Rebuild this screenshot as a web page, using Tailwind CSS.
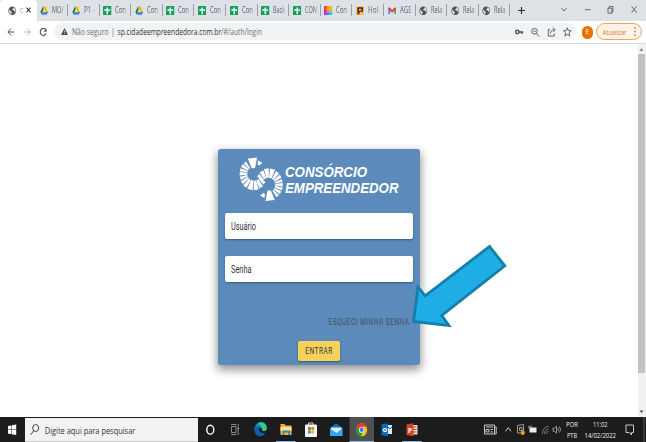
<!DOCTYPE html>
<html lang="pt-BR">
<head>
<meta charset="utf-8">
<title>Consórcio Empreendedor</title>
<script src="https://cdn.jsdelivr.net/npm/@tailwindcss/browser@4"></script>
</head>
<body class="w-[646px] h-[442px] overflow-hidden bg-white font-['Open_Sans','Noto_Sans',sans-serif] text-[#3c4043]">
<svg class="hidden">
  <symbol id="drive" viewBox="0 0 24 24" preserveAspectRatio="none"><path fill="#188038" d="M8 2h4L5 22 1 15z"/><path fill="#fbbc04" d="M8 2h8l7 13h-7z"/><path fill="#4285f4" d="M8 15h15l-4 7H5z"/></symbol>
  <symbol id="sheet" viewBox="0 0 24 24" preserveAspectRatio="none"><rect width="24" height="24" rx="2" fill="#12a05c"/><path fill="#fff" d="M10 4h4v4h6v4h-6v9h-4v-9H4V8h6z"/></symbol>
  <symbol id="globe" viewBox="0 0 24 24" preserveAspectRatio="none"><circle cx="12" cy="12" r="11" fill="#50555a"/><path fill="#e4e7ea" d="M3 9l7 6v6C5 20 2 15 3 9zM8 4l7-1v4l-3 1v3h4l3 3 1 3c3-5 2-9-2-12l-3-2z"/></symbol>
  <symbol id="mosaic" viewBox="0 0 24 24" preserveAspectRatio="none"><path fill="#f44336" d="M0 0h8v8H0z"/><path fill="#ff9800" d="M8 0h8v8H8z"/><path fill="#ffc107" d="M16 0h8v8h-8z"/><path fill="#e91e90" d="M0 8h8v8H0z"/><path fill="#ff8a3c" d="M8 8h8v8H8z"/><path fill="#8bdc30" d="M16 8h8v8h-8z"/><path fill="#9c27f0" d="M0 16h8v8H0z"/><path fill="#4b7cff" d="M8 16h8v8H8z"/><path fill="#20cfc0" d="M16 16h8v8h-8z"/></symbol>
  <symbol id="hol" viewBox="0 0 24 24" preserveAspectRatio="none"><rect width="24" height="24" rx="2" fill="#f7c948"/><path fill="#3a1f2b" d="M4 3h16v12H10v6H4z"/><path fill="#fff" d="M9 7h6v5H9z"/><path fill="#d8432e" d="M12 9h6v5h-6zM2 18h8v3H2z"/></symbol>
  <symbol id="gmail" viewBox="0 0 24 24" preserveAspectRatio="none"><path fill="#4285f4" d="M1 5h5v15H1z"/><path fill="#34a853" d="M18 5h5v15h-5z"/><path fill="#ea4335" d="M1 4h4l7 6 7-6h4v4l-11 9L1 8z"/></symbol>
</svg>

<div class="flex flex-col w-[646px] h-[442px]">
  <!-- tab strip -->
  <header class="flex h-[20.5px] shrink-0 bg-[#dee1e6] text-[8px] text-[#5f6368]">
    <div class="flex items-center w-[36.5px] shrink-0 bg-white rounded-t-[4px] pl-[8px]">
      <svg class="w-[8.5px] h-[9.5px] shrink-0"><use href="#globe"/></svg>
      <svg class="w-[4px] h-[12px] ml-[3px] shrink-0" viewBox="0 0 4 12"><text x="0" y="9" textLength="3" lengthAdjust="spacingAndGlyphs" fill="#8a8e92">C</text></svg>
      <svg class="w-[5px] h-[6px] ml-[2.5px]" viewBox="0 0 10 10" preserveAspectRatio="none"><path d="M1 1l8 8M9 1l-8 8" stroke="#333" stroke-width="2.2"/></svg>
    </div>
    <div id="tabs" class="flex"></div>
    <div class="flex items-center flex-1">
      <svg class="w-[7px] h-[7px] ml-[7.500px]" viewBox="0 0 7 7"><path d="M3.5 0v7M0 3.5h7" stroke="#2b2e31" stroke-width="1.2"/></svg>
      <svg class="w-[77px] h-[10px] ml-[36.500px] shrink-0" viewBox="0 0 77 10" fill="none" stroke="#4b4f54" stroke-width=".8"><path d="M.5 3l2.500 3L5.500 3M24 4.700h5.500M47 3.200h3.800v5h-3.800zM48.200 3.100V1.500h3.800v5.300h-1M70.500 1.300l5.200 6.500M75.700 1.300l-5.200 6.500"/></svg>
    </div>
  </header>

  <!-- toolbar -->
  <div class="flex items-center h-[23px] shrink-0 border-b border-[#d9dbde] bg-white">
    <svg class="w-[54px] h-[22px] shrink-0" viewBox="0 0 54 22" fill="none" stroke-width="1"><path stroke="#50555a" d="M14.300 11H8M11 7.600L7.900 11l3.100 3.400"/><path stroke="#b6b9bd" d="M24 11h6.300M27.300 7.600l3.100 3.400-3.100 3.400"/><path stroke="#50555a" stroke-width="1.200" d="M45.700 8.800A3 3.600 0 1 0 46 12.500"/><path fill="#50555a" d="M46.700 7.300v3.400h-3z"/></svg>
    <div class="flex items-center w-[522px] h-[16.500px] rounded-full bg-[#f1f3f4] shrink-0 pl-[6.500px]">
      <svg class="w-[7px] h-[7px] shrink-0" viewBox="0 0 14 14"><path d="M7 0l7 14H0z" fill="#4a4e52"/><path d="M7 5v4M7 10.500v1.500" stroke="#f1f3f4" stroke-width="1.400"/></svg>
      <svg class="w-[210px] h-[16px] shrink-0 ml-[4px]" viewBox="0 0 210 16" font-size="9"><text x="0" y="11.300" textLength="36.500" lengthAdjust="spacingAndGlyphs" fill="#6b7075">Não seguro</text><path d="M41 4v9" stroke="#8a8e92" stroke-width=".7"/><text x="45.500" y="11.300" textLength="144.500" lengthAdjust="spacingAndGlyphs" fill="#303336">sp.cidadeempreendedora.com.br<tspan fill="#6b7075">/#/auth/login</tspan></text></svg>
      <svg class="w-[62px] h-[16px] ml-auto mr-[1.500px]" viewBox="0 0 62 16" fill="none" stroke="#50555a" stroke-width=".9"><circle cx="4.300" cy="8" r="1.700" stroke-width="1.500"/><path stroke-width="1.500" d="M6 8h4.200M9 8v2"/><circle cx="21.500" cy="7.200" r="2.800"/><path d="M23.500 9.500l2.600 3M20.200 7.200h2.600"/><path d="M37 5.500h-1.700v6.500h6V9.500M37.500 9.500c0-2.500 1.500-3.800 4-3.800M40 3.500l2.200 2.200L40 8"/><path d="M54.300 3.800l1.100 2.800 2.700.2-2.100 2 .7 3.200-2.400-1.700-2.400 1.700.7-3.200-2.100-2 2.700-.2z"/></svg>
    </div>
    <div class="flex items-center justify-center w-[11px] h-[13px] mt-[1px] ml-[6px] shrink-0 rounded-full bg-[#ee6c00] text-white text-[7px]">E</div>
    <div class="flex items-center w-[46px] h-[17.500px] ml-[3px] shrink-0 rounded-full border border-[#eda45c] bg-[#fef3e8]">
      <svg class="w-[44px] h-[15px]" viewBox="0 0 44 15"><text x="5.700" y="10.500" font-size="8" textLength="24" lengthAdjust="spacingAndGlyphs" fill="#dc7d22">Atualizar</text><g fill="#e08a20"><circle cx="38" cy="4" r=".9"/><circle cx="38" cy="7.500" r=".9"/><circle cx="38" cy="11" r=".9"/></g></svg>
    </div>
  </div>

  <!-- page -->
  <main class="flex flex-1 min-h-0">
    <div class="w-[637.500px] pt-[105px] pl-[218px]">
      <form class="w-[201.500px] h-[216.500px] rounded-[3px] bg-[#5c8aba] shadow-[0_4px_10px_1px_rgba(0,0,0,.42)] px-[7px] pt-[7px] flex flex-col font-[Roboto,sans-serif]">
        <svg class="w-[170px] h-[48px] ml-[10px] shrink-0" viewBox="0 0 170 48">
          <g id="rays" fill="#fff"></g>
          <g fill="#fff" font-family="Liberation Sans, Arial, sans-serif" font-style="italic" font-weight="700" font-size="15.500"><text x="50" y="21" textLength="82" lengthAdjust="spacingAndGlyphs">CONSÓRCIO</text><text x="50" y="37" textLength="113.500" lengthAdjust="spacingAndGlyphs">EMPREENDEDOR</text></g>
        </svg>
        <div class="mt-[9px] h-[26.500px] shrink-0 rounded-[2px] bg-white shadow-[0_1px_2px_rgba(0,0,0,.35)] flex items-center pl-[5.500px]">
          <svg class="w-[30px] h-[16px]" viewBox="0 0 30 16"><text y="12" font-size="10" textLength="25" lengthAdjust="spacingAndGlyphs" fill="#333">Usuário</text></svg>
        </div>
        <div class="mt-[16.500px] h-[26.500px] shrink-0 rounded-[2px] bg-white shadow-[0_1px_2px_rgba(0,0,0,.35)] flex items-center pl-[5.500px]">
          <svg class="w-[30px] h-[16px]" viewBox="0 0 30 16"><text y="12" font-size="10" textLength="20.500" lengthAdjust="spacingAndGlyphs" fill="#333">Senha</text></svg>
        </div>
        <svg class="w-[82px] h-[12px] self-end mt-[34px] mr-[3px] shrink-0" viewBox="0 0 82 12"><text x="0.500" y="9" font-size="8.200" textLength="81" lengthAdjust="spacingAndGlyphs" letter-spacing=".7" fill="#474f59">ESQUECI MINHA SENHA</text></svg>
        <div class="mt-[12.500px] ml-[72.500px] w-[42.500px] h-[20px] shrink-0 rounded-[2px] bg-[#f5d35b] shadow-[0_1px_2px_rgba(0,0,0,.4)] flex items-center justify-center">
          <svg class="w-[28px] h-[12px]" viewBox="0 0 28 12"><text x=".3" y="9" font-size="8.200" textLength="27.500" lengthAdjust="spacingAndGlyphs" letter-spacing=".6" fill="#3a3930">ENTRAR</text></svg>
        </div>
      </form>
    </div>
    <div class="flex flex-col items-center w-[8.500px] bg-[#f1f1f1]">
      <svg class="w-[5px] h-[10.500px] shrink-0" viewBox="0 0 5 11"><path d="M.5 7L2.500 4.500 4.500 7z" fill="#777"/></svg>
      <div class="w-[7px] h-[318.500px] bg-[#c1c1c1]"></div>
      <svg class="w-[5px] h-[11px] mt-auto" viewBox="0 0 5 11"><path d="M.5 4.500L2.500 7 4.500 4.500z" fill="#505050"/></svg>
    </div>
  </main>

  <!-- taskbar -->
  <footer class="flex h-[25px] shrink-0 bg-[#1c1c1c]">
    <svg class="w-[24.500px] h-[25px]" viewBox="0 0 24.500 25"><path fill="#fff" d="M8 9l3.500-.6V12.500H8zM12 8.300l4.200-.7v4.900H12zM8 13h3.500v4.200L8 16.600zM12 13h4.200v4.900l-4.200-.7z"/></svg>
    <div class="flex items-center w-[173px] h-[24px] mt-[1px] bg-[#f2f2f2] border-b border-[#c9c9c9]">
      <svg class="w-[140px] h-[22px]" viewBox="0 0 140 22"><g fill="none" stroke="#333" stroke-width=".9"><ellipse cx="10.700" cy="9" rx="3" ry="3.500"/><path d="M8.700 11.700L5.800 15.700"/></g><text x="19.800" y="14.500" font-size="9.800" textLength="90.500" lengthAdjust="spacingAndGlyphs" fill="#333">Digite aqui para pesquisar</text></svg>
    </div>
    <svg class="w-[232px] h-[25px]" viewBox="197.500 0 232 25">
      <ellipse cx="209.800" cy="12.700" rx="3.500" ry="4.400" fill="none" stroke="#fff" stroke-width="1.400"/>
      <path d="M231 9.500h4.500v6h-4.500zM230.500 7.500h5.500M230.500 17.500h5.500M237.700 7v11M236.800 11.500h2" fill="none" stroke="#a5a5a5" stroke-width=".8"/>
      <path fill="#168bd2" d="M254 13c0-5 3-7.800 6.500-7.800 4 0 6 3.500 5.700 6.300-.3 2-2 2.700-4.200 2.500 0-2-1-3.500-3-3.500-2.200 0-3.500 1.500-3.500 4z"/><path fill="#35c986" d="M257 6.200c4-2.300 9-.2 9.300 4.500.1 3-2 3.600-4.500 3.300.8-2.500-.8-5.500-4.800-7.800z"/><path fill="#0c61ad" d="M254 13c.2-3 3-4.500 5.500-3.300-2.300 2.500-1 6.800 5.300 6.500-2.500 4.500-10.500 4.500-10.800-3.200z"/>
      <path fill="#f0b43c" d="M280 7h4l1 1.500h6V18h-11z"/><path fill="#ffe08a" d="M280 10h11v4h-11z"/><path fill="#2f89d8" d="M282 13.500h7.500V18h-2v-2.500h-3.500V18h-2z"/>
      <path fill="#83b8ea" d="M275.500 24h19.500v1.200h-19.500z"/>
      <path d="M308 8V6h4.500v2" fill="none" stroke="#ddd" stroke-width="1"/><rect x="304.500" y="7.500" width="12" height="12.500" rx="1" fill="#f6f6f6"/><path fill="#f25022" d="M307.500 10h2.800v3h-2.800z"/><path fill="#7fba00" d="M310.800 10h2.800v3h-2.800z"/><path fill="#00a4ef" d="M307.500 13.500h2.800v3h-2.800z"/><path fill="#ffb900" d="M310.800 13.500h2.800v3h-2.800z"/>
      <path fill="#0c6fc4" d="M329.500 11l6-4.800 6.500 4.800v8h-12.500z"/><path fill="#dceefc" d="M330.500 10.500h10.500v2.500l-5 4-5.500-4z"/><path fill="#2fa3ec" d="M329.500 11.500l6.500 4.500 6-4.500V19h-12.500z"/>
      <path fill="#505050" d="M349 0h24.500v25H349z"/><path fill="#83b8ea" d="M349 24h24.500v1.200H349z"/>
      <ellipse cx="361.200" cy="12.800" rx="5.500" ry="6.500" fill="#fbc116"/><path fill="#e33b2e" d="M356.200 9.800c2-5.200 8-5.200 10.100 0h-5.100l-2.500 5z"/><path fill="#249c4b" d="M356.200 9.800l3 5.500 3 .5-1.800 3.500c-4-.5-6.300-5-4.200-9.500z"/><ellipse cx="361.200" cy="12.700" rx="2.600" ry="3" fill="#fff"/><ellipse cx="361.200" cy="12.700" rx="2" ry="2.400" fill="#3b7de5"/>
      <path fill="#d6eafa" d="M386 8h5.500v9H386z"/><path d="M386.500 9l3 3 2-2.500" stroke="#0f6cbd" fill="none"/><path fill="#0f6cbd" d="M381 7.500l6.500-1.200v13l-6.500-1.200z"/><text x="382" y="15.300" font-size="7" font-weight="700" fill="#fff" textLength="4.800" lengthAdjust="spacingAndGlyphs">o</text>
      <path fill="#f4d8cf" d="M411 8h6v9.500h-6z"/><path d="M412 10h4M412 12.500h4M412 15h4" stroke="#d24726" stroke-width="1.100"/><path fill="#d24726" d="M406 7.500l7-1.200v13l-7-1.200z"/><text x="407.500" y="15.500" font-size="7.500" font-weight="700" fill="#fff" textLength="4" lengthAdjust="spacingAndGlyphs">P</text>
      <path fill="#83b8ea" d="M401.500 24h20v1.200h-20z"/>
    </svg>
    <svg class="w-[216.500px] h-[25px]" viewBox="429.500 0 216.500 25">
      <g fill="none" stroke="#ddd" stroke-width=".9"><path d="M484 8h10v9h-10zM494 10h1.700v7H494M485.500 10h7M485.500 12.500h3v2.500h-3zM490 12.500h2.500M490 15h2.500"/><path d="M505 14.300l2.800-3.800 2.800 3.800"/><path stroke="#bbb" stroke-width=".8" d="M517 8.500l6-1v8.500h-6zM519 10.500h2.500v3H519z"/><path d="M528.500 9v2.500M530.500 8.500v2"/><path stroke="#999" stroke-width=".8" d="M542 17c0-4 2.500-7.500 6-7.500M544 17c0-2.500 1.500-5 4-5M546 17c0-1.500.8-2.500 2-2.500"/><path stroke="#bbb" stroke-width=".8" d="M552.500 11.200h1.500l2-2v7l-2-2h-1.500zM557.500 11q1 1.500 0 3M559 9.500q2 3 0 6"/><path d="M625.500 8h7.500v7.500h-2v2.500l-2.300-2.500h-3.200z"/></g>
      <path fill="#eee" d="M529 10.500h7v5h-7z"/><ellipse cx="522.300" cy="15.800" rx="2" ry="2.200" fill="#f59b1b"/>
      <g fill="#eee" font-size="7.500"><text x="565.500" y="10" textLength="12" lengthAdjust="spacingAndGlyphs">POR</text><text x="566.500" y="21" textLength="10" lengthAdjust="spacingAndGlyphs">PTB</text><text x="592.500" y="10" textLength="14.500" lengthAdjust="spacingAndGlyphs">11:02</text><text x="584" y="21" textLength="31.500" lengthAdjust="spacingAndGlyphs">14/02/2022</text></g>
      <path d="M643.500 0v25" stroke="#777" stroke-width=".7"/>
    </svg>
  </footer>
</div>

<!-- pointer arrow over the page -->
<svg class="absolute left-[400px] top-[235px] w-[120px] h-[100px]" viewBox="0 0 120 100"><path d="M13.500 86.500L18 52 25.200 60.900 89.500 11.500 104.800 30.800 41.800 80.500 48.900 90.600z" fill="#1eade4" stroke="#147fa8" stroke-width="2.800"/></svg>

<script>
const tabs = [['drive','MO/',11.5],['drive','P1 -',11],['sheet','Con',11],['drive','Con',11],['sheet','Con',11],['sheet','Con',11],['sheet','Con',11],['sheet','Back',12],['sheet','CON',12],['mosaic','Con',11],['hol','Hol',10],['gmail','AGE',11.5],['globe','Rela',11.5],['globe','Rela',11.5],['globe','Rela',11.5]];
document.getElementById('tabs').innerHTML = tabs.map(([icon, label, width]) =>
  `<div class="flex items-center w-[31.6px] shrink-0 pl-[3.500px]"><svg class="w-[8.500px] h-[9.500px] shrink-0"><use href="#${icon}"/></svg><svg class="w-[14px] h-[12px] ml-[3.500px] shrink-0 mask-r-from-60% mask-r-to-110%" viewBox="0 0 14 12"><text x="0" y="9" font-size="8.500" fill="#5f6368" textLength="${width}" lengthAdjust="spacingAndGlyphs">${label}</text></svg><i class="ml-auto w-px h-[12px] bg-[#9b9fa4]"></i></div>`).join('');

// Two interlocking rings of wedges: [angle, inner width, outer width, inner radius, outer radius]
const ring = [[-96,34,34,6,16.5],[-62,14,20,10,14],[-130,12,12,7,15],[-147,14,13,7,15],[-164,13,12,7,15],[180,14,13,7,15],[163,13,12,7,15],[146,14,13,7,15.5],[127,16,15,7,16],[105,22,19,7,16.5],[82,20,18,7,16.5],[61,18,16,7,15.5],[41,14,13,7,14.5]];
const pt = (cx, cy, r, a) => (cx + r * .96 * Math.cos(a * Math.PI / 180)).toFixed(1) + ',' + (cy + r * Math.sin(a * Math.PI / 180)).toFixed(1);
document.getElementById('rays').innerHTML = [[19,17.8,0],[33.5,28.800,180]].flatMap(([x, y, turn]) => ring.map(([angle, w, W, r, R]) => {
  const a = angle + turn;
  return `<path d="M${pt(x,y,r,a-w/2)}L${pt(x,y,R,a-W/2)} ${pt(x,y,R,a+W/2)} ${pt(x,y,r,a+w/2)}z"/>`;
})).join('');
</script>
</body>
</html>
